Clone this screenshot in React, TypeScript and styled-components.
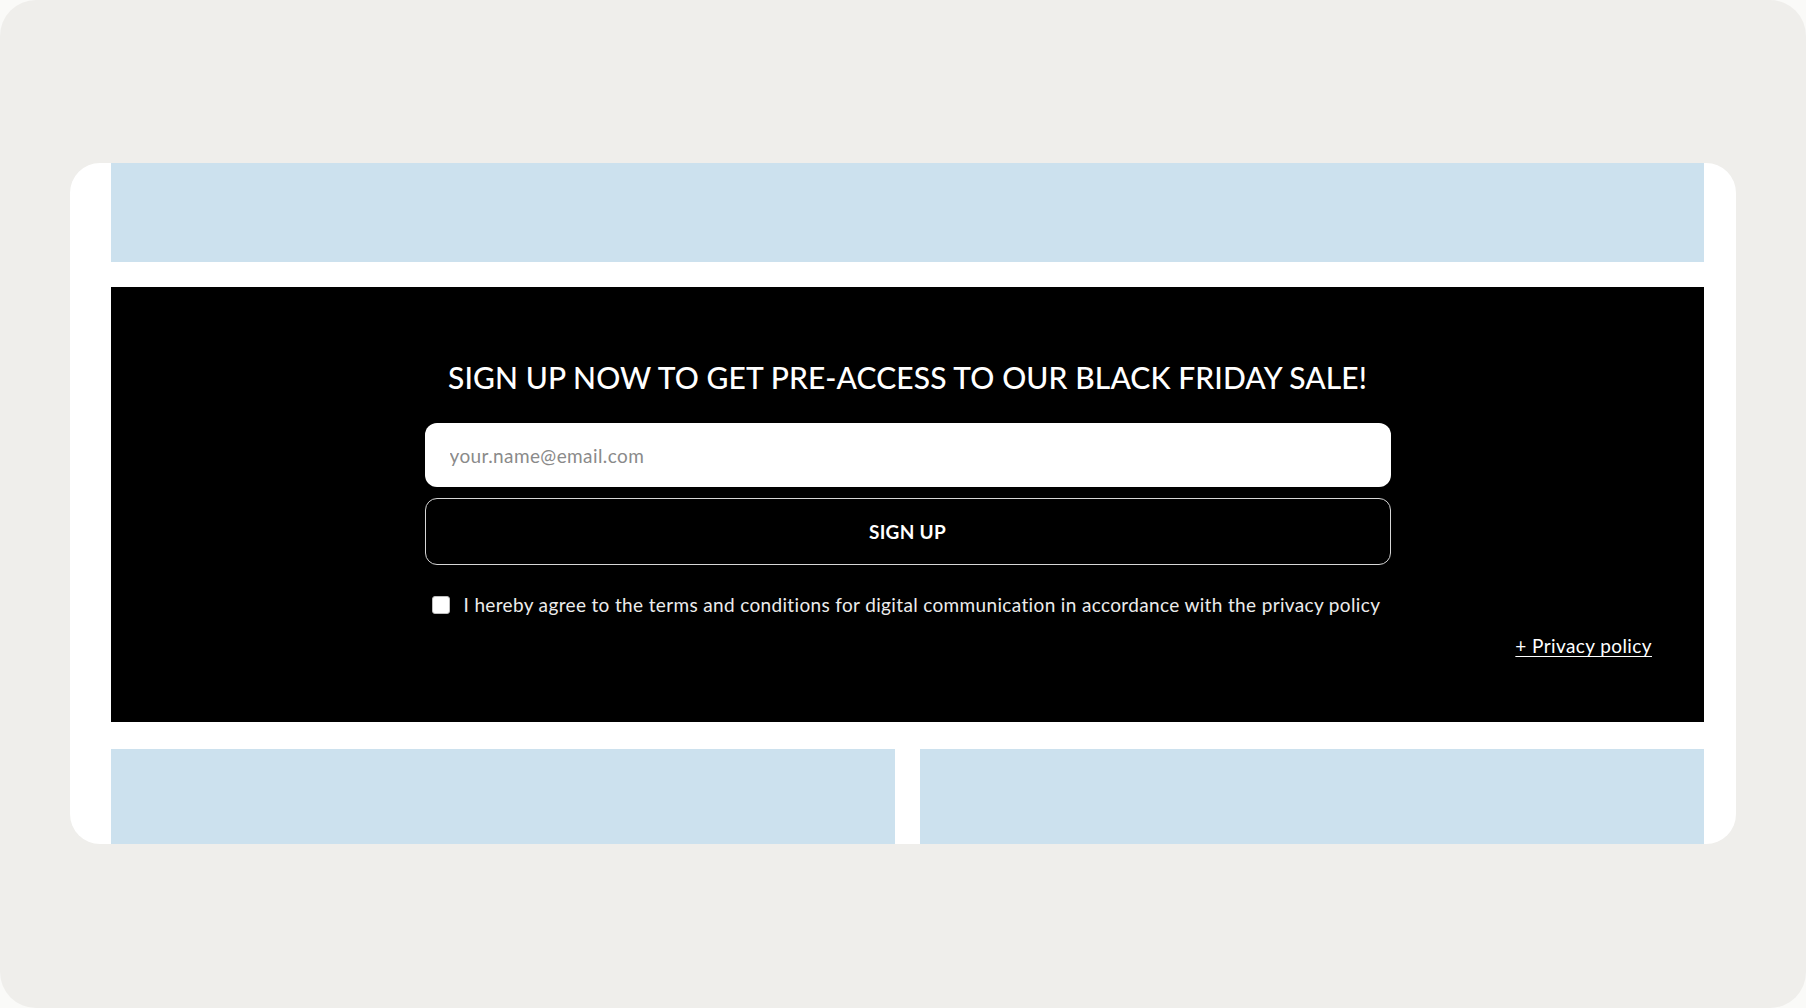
import styled, { createGlobalStyle } from 'styled-components';

const GlobalStyle = createGlobalStyle`
  html, body {
    margin: 0;
    padding: 0;
    background: #fafaf8;
  }
  * {
    box-sizing: border-box;
  }
`;

const Frame = styled.div`
  width: 1806px;
  height: 1008px;
  background: #efeeeb;
  border-radius: 36px;
  padding: 163px 70px 0 70px;
  font-family: Lato, "Open Sans", sans-serif;
`;

const Card = styled.div`
  height: 681px;
  background: #ffffff;
  border-radius: 30px;
  overflow: hidden;
  padding: 0 32px 0 41px;
  display: flex;
  flex-direction: column;
`;

const Placeholder = styled.div<{ $height: number }>`
  height: ${p => p.$height}px;
  background: #cce1ee;
`;

const Panel = styled.section`
  margin: 25px 0 27px;
  height: 435px;
  background: #000000;
  display: flex;
  flex-direction: column;
  align-items: center;
  padding-top: 72px;
`;

const Heading = styled.h2`
  margin: 0;
  color: #ffffff;
  font-size: 30px;
  line-height: 37px;
  font-weight: 500;
  text-align: center;
  letter-spacing: 0.1px;
`;

const Form = styled.form`
  width: 966px;
  margin-top: 27px;
  display: flex;
  flex-direction: column;
`;

const EmailInput = styled.input`
  height: 64px;
  border: none;
  border-radius: 12px;
  background: #ffffff;
  padding: 0 25px;
  font-family: inherit;
  font-size: 19px;
  letter-spacing: 0.4px;
  color: #222;
  outline: none;

  &::placeholder {
    color: #8a8a8a;
  }
`;

const SubmitButton = styled.button`
  margin-top: 11px;
  height: 67px;
  background: #000000;
  border: 1.5px solid #d6d6d6;
  border-radius: 12px;
  color: #ffffff;
  font-family: inherit;
  font-size: 19px;
  font-weight: 700;
  letter-spacing: 0.3px;
  cursor: pointer;
`;

const ConsentRow = styled.label`
  margin-top: 28px;
  display: flex;
  align-items: center;
  gap: 14px;
  padding-left: 7px;
  color: #ececec;
  font-size: 19px;
  line-height: 24px;
  font-weight: 400;
  letter-spacing: 0.35px;
  cursor: pointer;
`;

const Box = styled.input`
  appearance: none;
  margin: 0;
  width: 18px;
  height: 18px;
  background: #ffffff;
  border: 1px solid #bdbdbd;
  border-radius: 3px;
  flex: none;
`;

const LinkRow = styled.div`
  align-self: stretch;
  display: flex;
  justify-content: flex-end;
  padding-right: 52px;
  margin-top: 17px;
`;

const PolicyLink = styled.a`
  color: #ffffff;
  font-size: 19px;
  line-height: 24px;
  letter-spacing: 0.4px;
  text-decoration: underline;
  text-underline-offset: 3px;
`;

const BottomRow = styled.div`
  display: grid;
  grid-template-columns: 1fr 1fr;
  gap: 25px;
`;

export default function App() {
  return (
    <>
      <GlobalStyle />
      <Frame>
        <Card>
          <Placeholder $height={99} />
          <Panel>
            <Heading>SIGN UP NOW TO GET PRE-ACCESS TO OUR BLACK FRIDAY SALE!</Heading>
            <Form onSubmit={e => e.preventDefault()}>
              <EmailInput type="email" placeholder="your.name@email.com" />
              <SubmitButton type="submit">SIGN UP</SubmitButton>
              <ConsentRow>
                <Box type="checkbox" />
                I hereby agree to the terms and conditions for digital communication in accordance with the privacy policy
              </ConsentRow>
            </Form>
            <LinkRow>
              <PolicyLink href="#">+ Privacy policy</PolicyLink>
            </LinkRow>
          </Panel>
          <BottomRow>
            <Placeholder $height={95} />
            <Placeholder $height={95} />
          </BottomRow>
        </Card>
      </Frame>
    </>
  );
}
